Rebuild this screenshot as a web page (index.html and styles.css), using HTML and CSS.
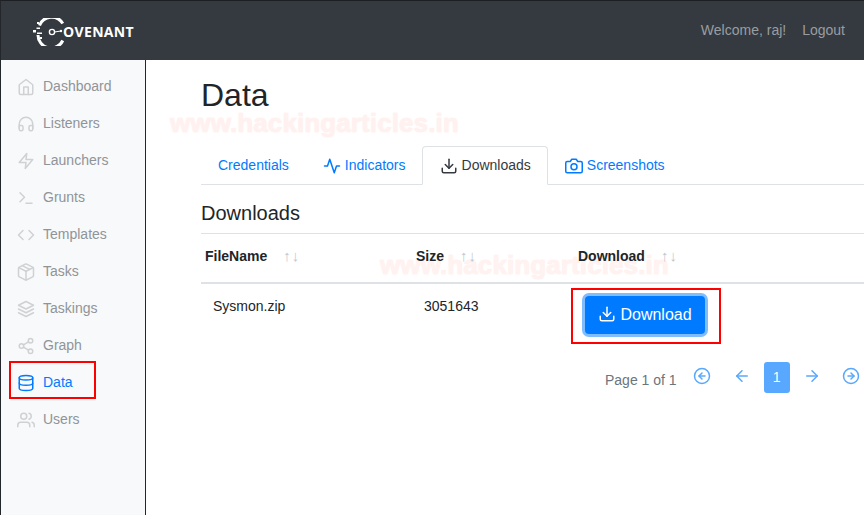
FILE: index.html
```html
<!DOCTYPE html>
<html lang="en">
<head>
<meta charset="utf-8">
<title>Covenant - Data</title>
<link rel="stylesheet" href="styles.css">
</head>
<body>
<svg class="defs" aria-hidden="true">
  <symbol id="home" viewBox="0 0 24 24"><path d="M3 9l9-7 9 7v11a2 2 0 0 1-2 2H5a2 2 0 0 1-2-2z"/><polyline points="9 22 9 12 15 12 15 22"/></symbol>
  <symbol id="headphones" viewBox="0 0 24 24"><path d="M3 18v-6a9 9 0 0 1 18 0v6"/><path d="M21 19a2 2 0 0 1-2 2h-1a2 2 0 0 1-2-2v-3a2 2 0 0 1 2-2h3zM3 19a2 2 0 0 0 2 2h1a2 2 0 0 0 2-2v-3a2 2 0 0 0-2-2H3z"/></symbol>
  <symbol id="zap" viewBox="0 0 24 24"><polygon points="13 2 3 14 12 14 11 22 21 10 12 10 13 2"/></symbol>
  <symbol id="terminal" viewBox="0 0 24 24"><polyline points="4 17 10 11 4 5"/><line x1="12" y1="19" x2="20" y2="19"/></symbol>
  <symbol id="code" viewBox="0 0 24 24"><polyline points="16 18 22 12 16 6"/><polyline points="8 6 2 12 8 18"/></symbol>
  <symbol id="package" viewBox="0 0 24 24"><path d="M12.89 1.45l8 4A2 2 0 0 1 22 7.24v9.53a2 2 0 0 1-1.11 1.79l-8 4a2 2 0 0 1-1.79 0l-8-4a2 2 0 0 1-1.1-1.8V7.24a2 2 0 0 1 1.11-1.79l8-4a2 2 0 0 1 1.78 0z"/><polyline points="2.32 6.16 12 11 21.68 6.16"/><line x1="12" y1="22.76" x2="12" y2="11"/><line x1="7" y1="3.5" x2="17" y2="8.5"/></symbol>
  <symbol id="layers" viewBox="0 0 24 24"><polygon points="12 2 2 7 12 12 22 7 12 2"/><polyline points="2 17 12 22 22 17"/><polyline points="2 12 12 17 22 12"/></symbol>
  <symbol id="share" viewBox="0 0 24 24"><circle cx="18" cy="5" r="3"/><circle cx="6" cy="12" r="3"/><circle cx="18" cy="19" r="3"/><line x1="8.59" y1="13.51" x2="15.42" y2="17.49"/><line x1="15.41" y1="6.51" x2="8.59" y2="10.49"/></symbol>
  <symbol id="database" viewBox="0 0 24 24"><ellipse cx="12" cy="5" rx="9" ry="3"/><path d="M21 12c0 1.66-4 3-9 3s-9-1.34-9-3"/><path d="M3 5v14c0 1.66 4 3 9 3s9-1.34 9-3V5"/></symbol>
  <symbol id="users" viewBox="0 0 24 24"><path d="M17 21v-2a4 4 0 0 0-4-4H5a4 4 0 0 0-4 4v2"/><circle cx="9" cy="7" r="4"/><path d="M23 21v-2a4 4 0 0 0-3-3.87"/><path d="M16 3.13a4 4 0 0 1 0 7.75"/></symbol>
  <symbol id="activity" viewBox="0 0 24 24"><polyline points="22 12 18 12 15 21 9 3 6 12 2 12"/></symbol>
  <symbol id="download" viewBox="0 0 24 24"><path d="M21 15v4a2 2 0 0 1-2 2H5a2 2 0 0 1-2-2v-4"/><polyline points="7 10 12 15 17 10"/><line x1="12" y1="15" x2="12" y2="3"/></symbol>
  <symbol id="camera" viewBox="0 0 24 24"><path d="M23 19a2 2 0 0 1-2 2H3a2 2 0 0 1-2-2V8a2 2 0 0 1 2-2h4l2-3h6l2 3h4a2 2 0 0 1 2 2z"/><circle cx="12" cy="13" r="4"/></symbol>
  <symbol id="arrow-left" viewBox="0 0 24 24"><line x1="19" y1="12" x2="5" y2="12"/><polyline points="12 19 5 12 12 5"/></symbol>
  <symbol id="arrow-right" viewBox="0 0 24 24"><line x1="5" y1="12" x2="19" y2="12"/><polyline points="12 5 19 12 12 19"/></symbol>
  <symbol id="circle-left" viewBox="0 0 24 24"><circle cx="12" cy="12" r="10"/><polyline points="12 8 8 12 12 16"/><line x1="16" y1="12" x2="8" y2="12"/></symbol>
  <symbol id="circle-right" viewBox="0 0 24 24"><circle cx="12" cy="12" r="10"/><polyline points="12 16 16 12 12 8"/><line x1="8" y1="12" x2="16" y2="12"/></symbol>
</svg>

<header class="topbar">
  <a class="brand" href="#">
    <svg class="brand-mark" viewBox="0 0 32 28" aria-hidden="true">
      <path class="mark-arc" d="M29.8 5.5A13 13 0 0 0 6.5 7.5M5 17A13 13 0 0 0 29.8 22.5"/>
      <circle class="mark-ring" cx="19" cy="14" r="2.6"/>
      <line class="mark-line" x1="21.6" y1="14" x2="28" y2="13"/>
      <circle class="mark-dot" cx="28" cy="13" r="1.2"/>
      <path class="mark-bits" d="M0 12h3v2.5H0zM3.5 9.5h3.5v1.5H3.5zM4 14.5h5v1.5H4zM7 19h2v2H7zM4 4h2v2H4z"/>
    </svg>
    <span class="brand-text">OVENANT</span>
  </a>
  <nav class="user-nav">
    <span class="welcome">Welcome, raj!</span>
    <a class="logout" href="#">Logout</a>
  </nav>
</header>

<div class="shell">
  <aside class="sidebar">
    <a class="side-link" href="#"><svg class="icon"><use href="#home"/></svg>Dashboard</a>
    <a class="side-link" href="#"><svg class="icon"><use href="#headphones"/></svg>Listeners</a>
    <a class="side-link" href="#"><svg class="icon"><use href="#zap"/></svg>Launchers</a>
    <a class="side-link" href="#"><svg class="icon"><use href="#terminal"/></svg>Grunts</a>
    <a class="side-link" href="#"><svg class="icon"><use href="#code"/></svg>Templates</a>
    <a class="side-link" href="#"><svg class="icon"><use href="#package"/></svg>Tasks</a>
    <a class="side-link" href="#"><svg class="icon"><use href="#layers"/></svg>Taskings</a>
    <a class="side-link" href="#"><svg class="icon"><use href="#share"/></svg>Graph</a>
    <a class="side-link is-active" href="#"><svg class="icon"><use href="#database"/></svg>Data<span class="mark-box mark-box-nav"></span></a>
    <a class="side-link" href="#"><svg class="icon"><use href="#users"/></svg>Users</a>
  </aside>

  <main class="content">
    <h1 class="page-title">Data</h1>
    <span class="watermark watermark-top">www.hackingarticles.in</span>

    <ul class="tabs">
      <li><a class="tab" href="#">Credentials</a></li>
      <li><a class="tab" href="#"><svg class="icon"><use href="#activity"/></svg>Indicators</a></li>
      <li><a class="tab is-active" href="#"><svg class="icon"><use href="#download"/></svg>Downloads</a></li>
      <li><a class="tab" href="#"><svg class="icon"><use href="#camera"/></svg>Screenshots</a></li>
    </ul>

    <h2 class="section-title">Downloads</h2>

    <div class="table-wrap">
      <span class="watermark watermark-table">www.hackingarticles.in</span>
      <table class="data-table">
        <thead>
          <tr>
            <th class="col-name">FileName<span class="sort">↑↓</span></th>
            <th class="col-size">Size<span class="sort">↑↓</span></th>
            <th>Download<span class="sort">↑↓</span></th>
          </tr>
        </thead>
        <tbody>
          <tr>
            <td>Sysmon.zip</td>
            <td>3051643</td>
            <td class="action-cell">
              <button class="btn-download" type="button"><svg class="icon"><use href="#download"/></svg>Download</button>
              <span class="mark-box mark-box-btn"></span>
            </td>
          </tr>
        </tbody>
      </table>
    </div>

    <div class="pager">
      <span class="pager-label">Page 1 of 1</span>
      <a class="pager-btn pager-first" href="#"><svg class="icon"><use href="#circle-left"/></svg></a>
      <a class="pager-btn pager-prev" href="#"><svg class="icon"><use href="#arrow-left"/></svg></a>
      <span class="pager-current">1</span>
      <a class="pager-btn pager-next" href="#"><svg class="icon"><use href="#arrow-right"/></svg></a>
      <a class="pager-btn pager-last" href="#"><svg class="icon"><use href="#circle-right"/></svg></a>
    </div>
  </main>
</div>
</body>
</html>
```
FILE: styles.css
```css
* { box-sizing: border-box; }
html, body { height: 100%; }
body {
  margin: 0;
  display: flex;
  flex-direction: column;
  height: 515px;
  overflow: hidden;
  border-left: 1px solid #23272b;
  border-top: 1px solid #1d2023;
  background: #fff;
  color: #212529;
  font-family: "Liberation Sans", Arial, sans-serif;
  font-size: 14px;
  line-height: 21px;
}
a { text-decoration: none; }
.defs { display: none; }
.icon {
  width: 18px;
  height: 18px;
  fill: none;
  stroke: currentColor;
  stroke-width: 2;
  stroke-linecap: round;
  stroke-linejoin: round;
  flex: none;
}

.topbar {
  height: 59px;
  flex: none;
  display: flex;
  align-items: center;
  justify-content: space-between;
  padding: 0 19px 0 32px;
  background: #343a40;
}
.brand { display: flex; align-items: center; color: #fff; }
.brand-mark { width: 32px; height: 28px; flex: none; margin-top: 2px; }
.mark-arc { fill: none; stroke: #fff; stroke-width: 3; }
.mark-ring { fill: none; stroke: #fff; stroke-width: 1.4; }
.mark-line { stroke: #fff; stroke-width: 1.2; }
.mark-dot { fill: #fff; }
.mark-bits { fill: #fff; }
.brand-text {
  font-family: "Open Sans", "Liberation Sans", sans-serif;
  font-weight: 700;
  font-size: 14px;
  letter-spacing: .35px;
  margin: 2px 0 0 -2px;
}
.user-nav { display: flex; gap: 16px; color: #9a9da0; }
.logout { color: #9a9da0; }

.shell { flex: 1; display: flex; min-height: 0; }
.sidebar {
  width: 145px;
  flex: none;
  padding-top: 8px;
  background: #f8f9fa;
  border-right: 1px solid #23272b;
}
.side-link {
  position: relative;
  display: flex;
  align-items: center;
  gap: 8px;
  height: 37px;
  padding-left: 16px;
  color: #909498;
}
.side-link .icon { color: #cfd1d3; }
.side-link.is-active { color: #007bff; }
.side-link.is-active .icon { color: #007bff; }

.mark-box { position: absolute; border: 2px solid #f00; pointer-events: none; }
.mark-box-nav { left: 8px; top: -3px; width: 87px; height: 38px; }
.mark-box-btn { left: -3px; top: 4px; width: 150px; height: 56px; }

.content {
  position: relative;
  flex: 1;
  min-width: 0;
  padding: 16px 0 0 55px;
  overflow: hidden;
}
.page-title {
  margin: 0 0 32px;
  font-size: 32px;
  font-weight: 400;
  line-height: 38px;
}
.watermark {
  position: absolute;
  font-weight: 700;
  font-size: 26px;
  line-height: 30px;
  letter-spacing: .1px;
  white-space: nowrap;
  color: #fff1ef;
  -webkit-text-stroke: .5px #fff1ef;
  text-shadow: 0 0 2px #fff0ee;
  pointer-events: none;
}
.watermark-top { left: 24px; top: 48px; }
.watermark-table { left: 179px; top: 17px; color: #fff3f1; }

.tabs {
  display: flex;
  margin: 0 0 16px;
  padding: 0;
  list-style: none;
  border-bottom: 1px solid #dee2e6;
  height: 39px;
}
.tab {
  display: flex;
  align-items: center;
  gap: 4px;
  height: 39px;
  padding: 0 16px;
  color: #007bff;
  border: 1px solid transparent;
  border-radius: 4px 4px 0 0;
}
.tab.is-active {
  margin-left: -1px;
  padding-left: 17px;
  color: #343a40;
  background: #fff;
  border-color: #dee2e6 #dee2e6 #fff;
}
.section-title {
  margin: 0 0 8px;
  font-size: 20px;
  font-weight: 400;
  line-height: 24px;
}

.table-wrap { position: relative; }
.data-table {
  position: relative;
  width: 100%;
  table-layout: fixed;
  border-collapse: collapse;
  border-top: 1px solid #dee2e6;
}
.data-table th {
  height: 48px;
  padding: 12px 4px 15px;
  text-align: left;
  vertical-align: top;
  font-weight: 700;
  color: #212529;
  border-bottom: 2px solid #dee2e6;
}
.col-name { width: 211px; }
.col-size { width: 162px; }
.sort {
  margin-left: 16px;
  font-weight: 400;
  color: #c0c7ce;
  font-size: 15px;
  line-height: 1;
  letter-spacing: 1px;
}
.data-table td {
  padding: 12px;
  vertical-align: top;
}
.data-table .action-cell { position: relative; padding-left: 11px; }
.btn-download {
  display: flex;
  align-items: center;
  gap: 4px;
  width: 120px;
  height: 38px;
  justify-content: center;
  padding: 0 0 2px;
  font: inherit;
  font-size: 16px;
  color: #fff;
  background: #007bff;
  border: 0;
  border-radius: 4px;
  box-shadow: 0 0 0 3px rgba(0, 123, 255, .5);
}

.pager {
  display: flex;
  align-items: flex-start;
  margin-top: 16px;
  padding-left: 404px;
  color: #6c757d;
  height: 31px;
}
.pager-label { margin-top: 8px; }
.pager-btn { display: flex; color: #58a8ff; margin-top: 5px; }
.pager-first { margin-left: 16px; }
.pager-prev { margin-left: 22px; }
.pager-next { margin-left: 13px; }
.pager-last { margin-left: 21px; }
.pager-current {
  width: 26px;
  height: 31px;
  margin-left: 13px;
  display: flex;
  align-items: center;
  justify-content: center;
  color: #fff;
  background: #58a8ff;
  border-radius: 3px;
}
```
